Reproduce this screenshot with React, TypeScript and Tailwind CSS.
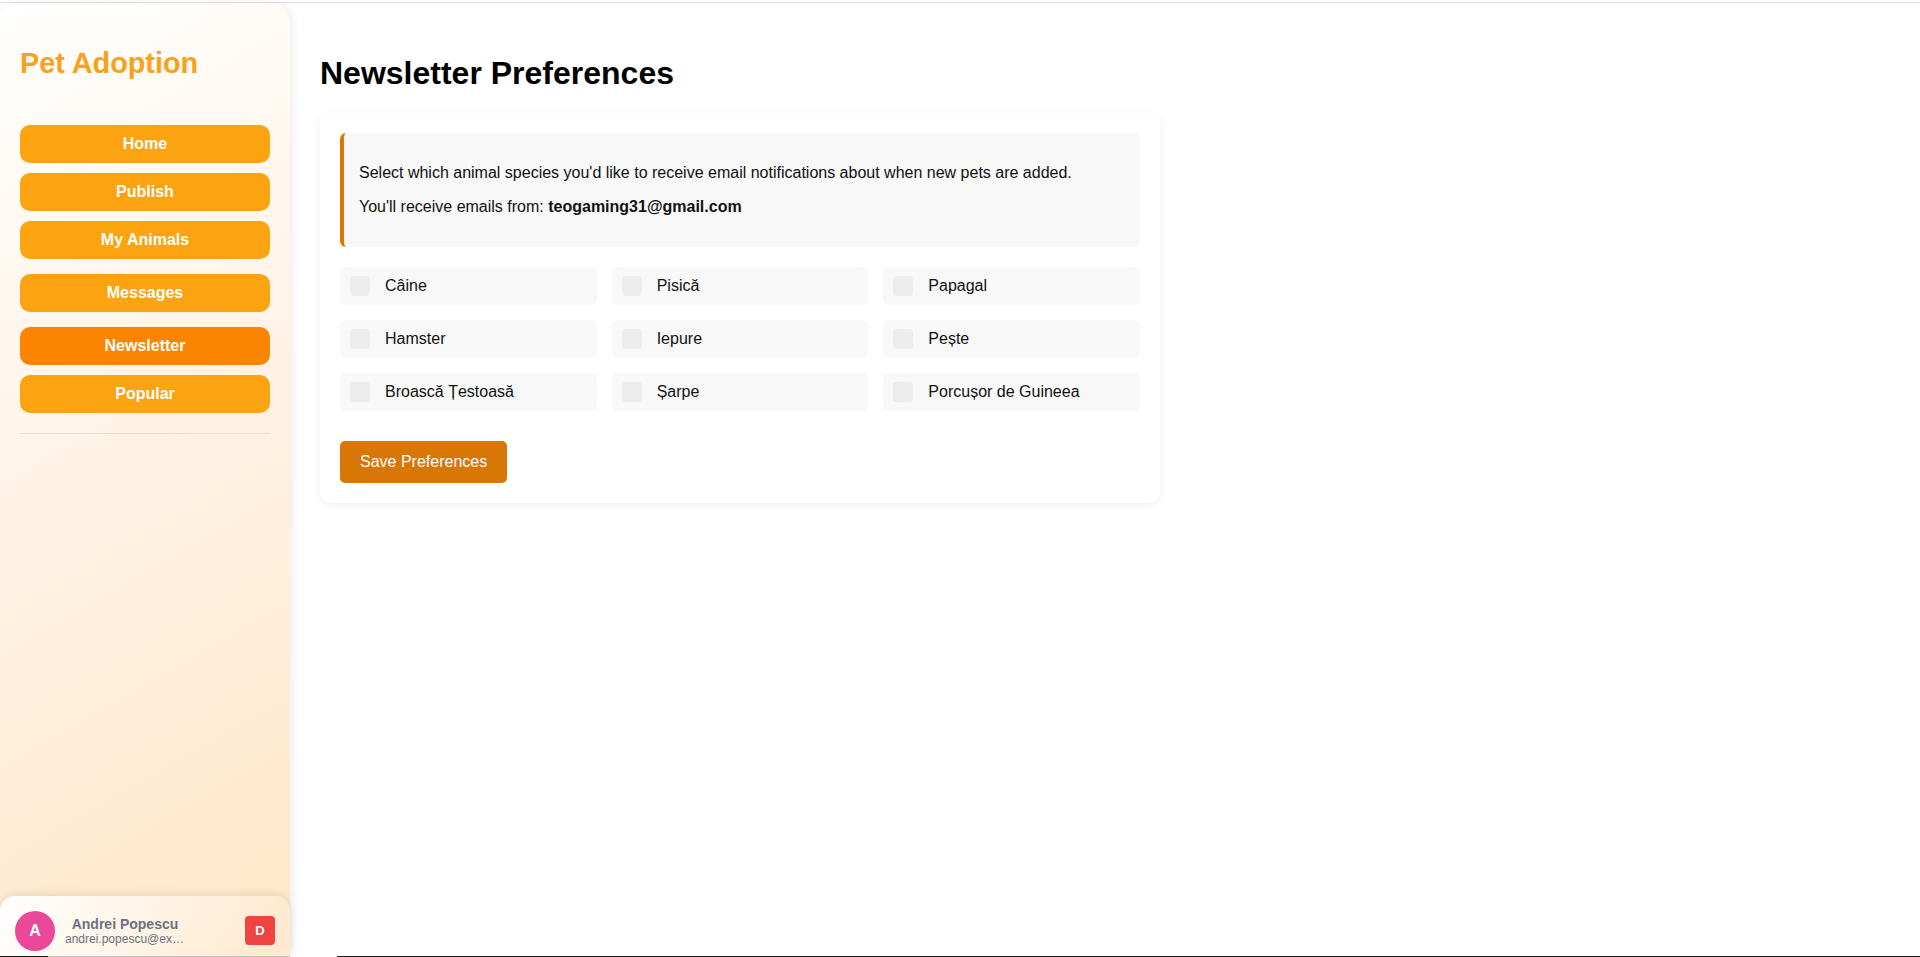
import React from "react";

const navItems = [
  { label: "Home", mt: "mt-0", active: false },
  { label: "Publish", mt: "mt-[10px]", active: false },
  { label: "My Animals", mt: "mt-[10px]", active: false },
  { label: "Messages", mt: "mt-[15px]", active: false },
  { label: "Newsletter", mt: "mt-[15px]", active: true },
  { label: "Popular", mt: "mt-[10px]", active: false },
];

const species = [
  "Câine",
  "Pisică",
  "Papagal",
  "Hamster",
  "Iepure",
  "Pește",
  "Broască Țestoasă",
  "Șarpe",
  "Porcușor de Guineea",
];

export default function App() {
  return (
    <div
      className="w-full h-[957px] overflow-hidden bg-white flex flex-col"
      style={{ fontFamily: '"Liberation Sans", Arial, Helvetica, sans-serif' }}
    >
      <div className="h-[2px] shrink-0 bg-white" />
      <div className="h-px shrink-0 bg-[#e2e2e2]" />
      <div className="flex flex-1 min-h-0">
        <aside className="w-[290px] shrink-0 flex flex-col rounded-t-[20px] bg-[linear-gradient(150deg,#ffffff_0%,#fff3e6_45%,#ffe6c7_100%)] shadow-[2px_0_10px_rgba(0,0,0,0.08)] relative z-10">
          <div className="px-5 pt-[44px]">
            <div className="text-[28.8px] leading-[33px] font-bold text-[#f9a11b]">
              Pet Adoption
            </div>
            <nav className="mt-[45px] flex flex-col">
              {navItems.map((n) => (
                <div
                  key={n.label}
                  className={`${n.mt} h-[38px] rounded-[10px] flex items-center justify-center text-white font-bold text-[16px] leading-[18px] ${
                    n.active ? "bg-[#fb8500]" : "bg-[#fca311]"
                  }`}
                >
                  {n.label}
                </div>
              ))}
            </nav>
            <div className="mt-5 h-px bg-[#e6ddd3]" />
          </div>
          <div className="mt-auto h-[60px] rounded-t-[15px] bg-[linear-gradient(120deg,#ffffff_0%,#fff1e0_60%,#ffe8cc_100%)] shadow-[0_-2px_10px_rgba(0,0,0,0.09)] flex items-start px-[15px] pt-[15px]">
            <div className="w-10 h-10 rounded-full bg-[#ec4899] flex items-center justify-center text-white font-bold text-[16px] shrink-0">
              A
            </div>
            <div className="ml-[10px] w-[120px] mt-[5px] text-center">
              <div className="text-[14px] leading-[16px] font-bold text-[#6b7280] truncate">
                Andrei Popescu
              </div>
              <div className="text-[12px] leading-[14px] text-[#6b7280] truncate">
                andrei.popescu@example.com
              </div>
            </div>
            <div className="ml-auto mt-[5px] w-[30px] h-[29px] rounded-[4px] bg-[#ef4444] flex items-center justify-center text-white font-bold text-[13px]">
              D
            </div>
          </div>
        </aside>
        <main className="flex-1 pl-[30px] pt-[52px]">
          <h1 className="text-[32px] leading-[37px] font-bold text-black">
            Newsletter Preferences
          </h1>
          <div className="mt-[21px] w-[840px] bg-white rounded-[10px] shadow-[0_2px_10px_rgba(0,0,0,0.06)] p-5">
            <div className="bg-[#f8f8f8] border-l-4 border-[#d97706] rounded-[6px] px-[15px] py-[31px] text-[16px] leading-[18px] text-[#111]">
              <p>
                Select which animal species you'd like to receive email notifications about when new pets are added.
              </p>
              <p className="mt-4">
                You'll receive emails from: <strong className="font-bold">teogaming31@gmail.com</strong>
              </p>
            </div>
            <div className="mt-5 grid grid-cols-3 gap-[15px]">
              {species.map((s) => (
                <label
                  key={s}
                  className="h-[38px] bg-[#f8f8f8] rounded-[6px] flex items-center px-[10px] gap-[15px]"
                >
                  <span className="w-5 h-5 rounded-[4px] bg-[#ededed] shrink-0" />
                  <span className="text-[16px] leading-[18px] text-[#111]">{s}</span>
                </label>
              ))}
            </div>
            <button className="mt-[30px] h-[42px] px-5 rounded-[5px] bg-[#d97706] text-white text-[16px] leading-[18px]">
              Save Preferences
            </button>
          </div>
        </main>
      </div>
      <div className="h-px shrink-0 flex">
        <div className="w-[48px] bg-[#222]" />
        <div className="w-[242px] bg-[#cfcfcf]" />
        <div className="w-[47px] bg-white" />
        <div className="flex-1 bg-[#222]" />
      </div>
    </div>
  );
}
